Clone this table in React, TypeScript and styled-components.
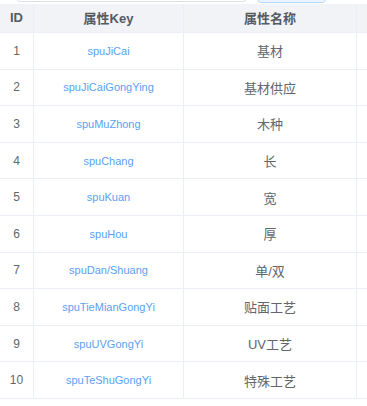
import React from "react";
import styled, { createGlobalStyle } from "styled-components";

const Global = createGlobalStyle`
  html, body { margin: 0; padding: 0; background: #fff; }
  body { font-family: "Liberation Sans", "Noto Sans CJK SC", sans-serif; }
  * { box-sizing: border-box; }
`;

const Viewport = styled.div`
  width: 367px;
  height: 406px;
  overflow: hidden;
`;

const Toolbar = styled.div`
  display: flex;
  align-items: flex-start;
  gap: 10px;
  height: 32px;
  margin-top: -29px;
  margin-bottom: 1px;
  padding-left: 16px;
`;

const SearchInput = styled.div`
  width: 231px;
  height: 31px;
  border: 1px solid #dcdfe6;
  border-radius: 4px;
  background: #fff;
`;

const PlainButton = styled.div`
  width: 69px;
  height: 32px;
  border: 1px solid #b3d8ff;
  border-radius: 4px;
  background: #ecf5ff;
`;

const Table = styled.div`
  width: 380px;
  font-family: "Liberation Sans", "Noto Sans CJK SC", sans-serif;
`;

const Row = styled.div<{ $head?: boolean }>`
  display: grid;
  grid-template-columns: 34px 150px 173px 1fr;
  height: ${(p) => (p.$head ? "29px" : "36.6px")};
  background: ${(p) => (p.$head ? "#f2f3f6" : "#fff")};
  border-bottom: 1px solid #ebeef5;
`;

const Cell = styled.div<{ $head?: boolean; $kind?: "id" | "key" | "name" }>`
  display: flex;
  align-items: center;
  justify-content: center;
  border-right: 1px solid #ebeef5;
  white-space: nowrap;
  overflow: hidden;
  font-weight: ${(p) => (p.$head ? 700 : 400)};
  font-size: ${(p) =>
    p.$head ? "13px" : p.$kind === "key" ? "11px" : p.$kind === "id" ? "12px" : "13px"};
  color: ${(p) =>
    p.$head ? "#555a63" : p.$kind === "key" ? "#5a9ff5" : "#62656b"};
  padding-bottom: ${(p) => (p.$head ? "1px" : "0")};
`;

const rows: [number, string, string][] = [
  [1, "spuJiCai", "基材"],
  [2, "spuJiCaiGongYing", "基材供应"],
  [3, "spuMuZhong", "木种"],
  [4, "spuChang", "长"],
  [5, "spuKuan", "宽"],
  [6, "spuHou", "厚"],
  [7, "spuDan/Shuang", "单/双"],
  [8, "spuTieMianGongYi", "贴面工艺"],
  [9, "spuUVGongYi", "UV工艺"],
  [10, "spuTeShuGongYi", "特殊工艺"],
];

export default function App() {
  return (
    <Viewport>
      <Global />
      <Toolbar>
        <SearchInput />
        <PlainButton />
      </Toolbar>
      <Table>
        <Row $head>
          <Cell $head>ID</Cell>
          <Cell $head>属性Key</Cell>
          <Cell $head>属性名称</Cell>
          <Cell $head />
        </Row>
        {rows.map(([id, key, name]) => (
          <Row key={id}>
            <Cell $kind="id">{id}</Cell>
            <Cell $kind="key">{key}</Cell>
            <Cell $kind="name">{name}</Cell>
            <Cell />
          </Row>
        ))}
      </Table>
    </Viewport>
  );
}
